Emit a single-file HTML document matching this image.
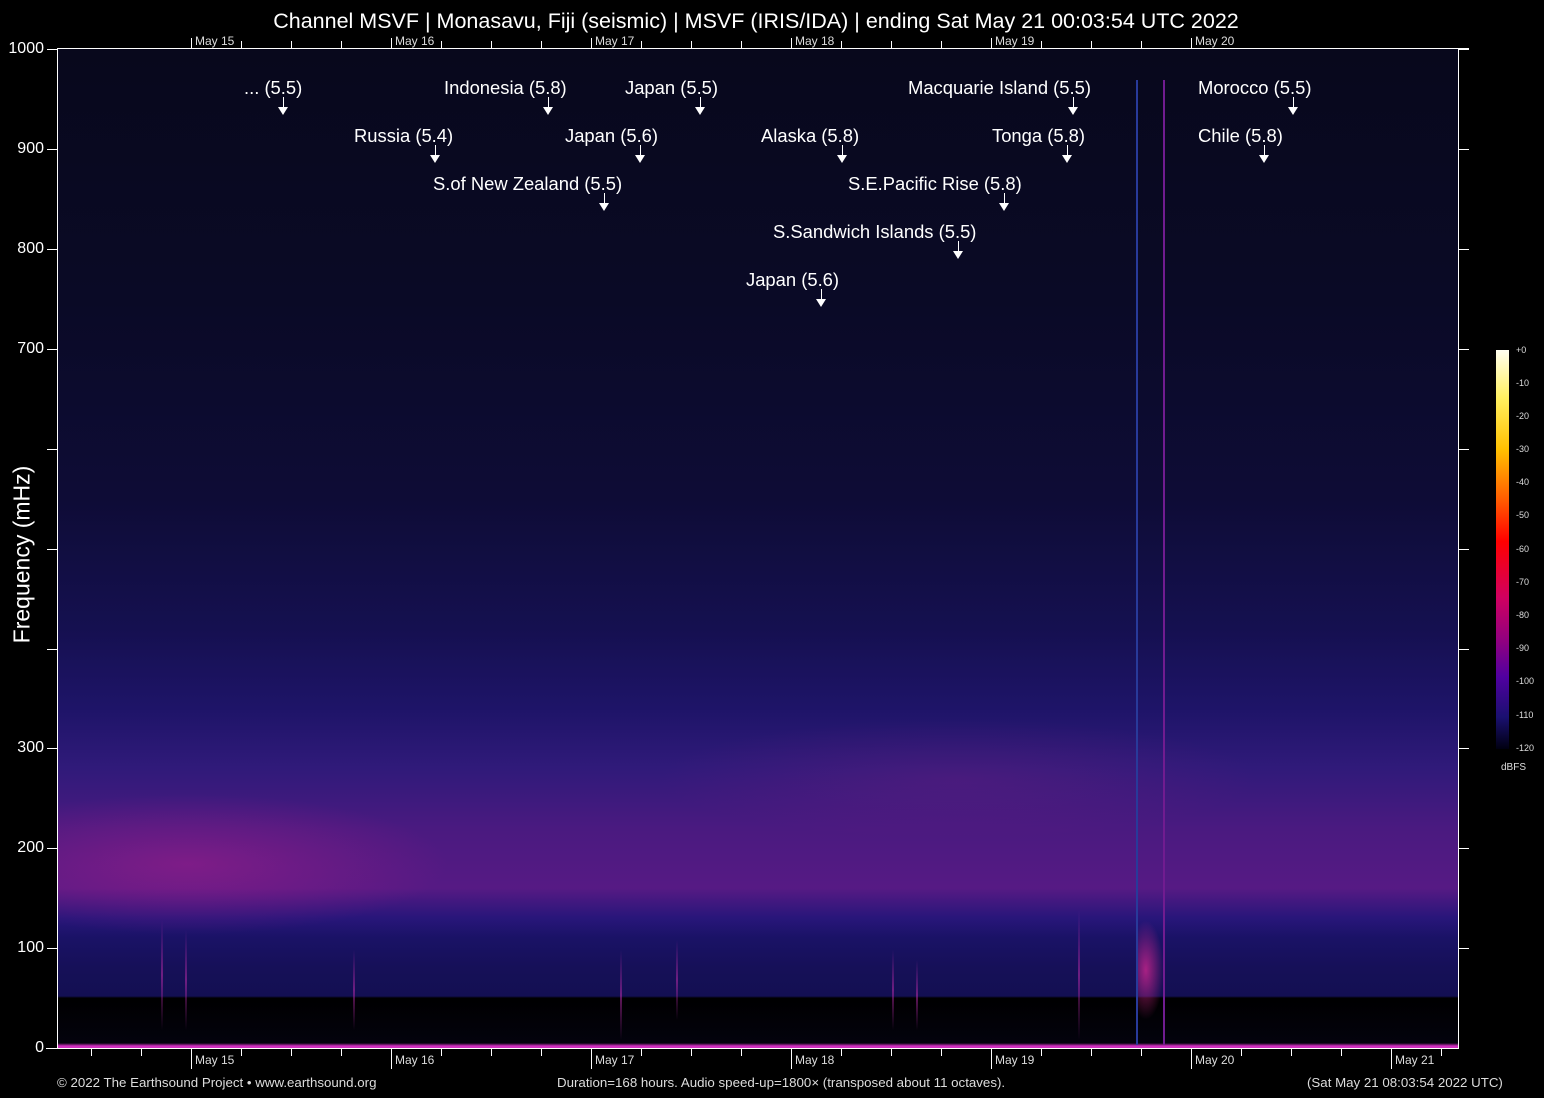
<!DOCTYPE html><html><head><style>
body{margin:0;background:#000;width:1544px;height:1098px;position:relative;overflow:hidden;font-family:"Liberation Sans",sans-serif;color:#fff}
.a{position:absolute;white-space:nowrap}
#plot{position:absolute;left:58px;top:49px;width:1400px;height:999px;
background:
linear-gradient(to bottom,rgba(0,0,0,0) 0,rgba(0,0,0,0) 94.8%,#000 95%,#03020d 99.5%,#d030c0 99.8%),
radial-gradient(ellipse 260px 70px at 130px 815px,rgba(170,30,140,.5),rgba(0,0,0,0)),
radial-gradient(ellipse 300px 60px at 900px 730px,rgba(120,30,130,.3),rgba(0,0,0,0)),
linear-gradient(to bottom,#08081c 0,#0a0a26 25%,#0e0c36 45%,#151050 58%,#1e1468 66%,#301a7a 72%,#4a1a80 78%,#561a84 84%,#28167a 87%,#1a1266 89%,#161058 92%,#130f52 94.8%)}
.t{position:absolute;background:#fff}
.ev{position:absolute;font-size:18.4px}
.ar{position:absolute;width:1px;height:14px;background:#fff}
.ah{position:absolute;width:0;height:0;border-left:5px solid transparent;border-right:5px solid transparent;border-top:8px solid #fff}
.yl{position:absolute;font-size:16px;text-align:right;width:44px;left:0}
.ml{position:absolute;font-size:12px;color:#ddd}
.cb{position:absolute;font-size:9px;color:#ddd;left:1516px}
.sp{position:absolute;width:2px;background:linear-gradient(to bottom,rgba(0,0,0,0),rgba(170,40,160,.6),rgba(0,0,0,0))}
</style></head><body>
<div class="a" style="left:0;width:1512px;text-align:center;top:9px;font-size:21.5px">Channel MSVF | Monasavu, Fiji (seismic) | MSVF (IRIS/IDA) | ending Sat May 21 00:03:54 UTC 2022</div>
<div id="plot"></div>
<div class="sp" style="left:161px;top:920px;height:110px"></div>
<div class="sp" style="left:185px;top:930px;height:100px"></div>
<div class="sp" style="left:353px;top:950px;height:80px"></div>
<div class="sp" style="left:620px;top:950px;height:90px"></div>
<div class="sp" style="left:676px;top:940px;height:80px"></div>
<div class="sp" style="left:892px;top:950px;height:80px"></div>
<div class="sp" style="left:916px;top:960px;height:70px"></div>
<div class="sp" style="left:1078px;top:910px;height:130px"></div>
<div class="a" style="left:1136px;top:80px;width:2px;height:965px;background:#283a9a"></div>
<div class="a" style="left:1163px;top:80px;width:2px;height:965px;background:#701c90"></div>
<div class="a" style="left:1138px;top:920px;width:26px;height:100px;background:radial-gradient(ellipse at 30% 50%,rgba(230,40,150,.7),rgba(0,0,0,0) 70%)"></div>
<div class="t" style="left:57px;top:49px;width:1px;height:1000px"></div>
<div class="t" style="left:1458px;top:49px;width:1px;height:1000px"></div>
<div class="t" style="left:57px;top:48px;width:1412px;height:1px"></div>
<div class="t" style="left:46px;top:1048px;width:1412px;height:1px"></div>
<div id="ticks"></div>
<div class="yl" style="top:40px">1000</div>
<div class="yl" style="top:140px">900</div>
<div class="yl" style="top:240px">800</div>
<div class="yl" style="top:340px">700</div>
<div class="yl" style="top:739px">300</div>
<div class="yl" style="top:839px">200</div>
<div class="yl" style="top:939px">100</div>
<div class="yl" style="top:1039px">0</div>
<div class="a" style="left:-73px;top:541px;font-size:23px;transform:rotate(-90deg);width:190px;text-align:center">Frequency (mHz)</div>
<div class="ev" style="left:244px;top:77px">... (5.5)</div>
<div class="ev" style="left:444px;top:77px">Indonesia (5.8)</div>
<div class="ev" style="left:625px;top:77px">Japan (5.5)</div>
<div class="ev" style="left:908px;top:77px">Macquarie Island (5.5)</div>
<div class="ev" style="left:1198px;top:77px">Morocco (5.5)</div>
<div class="ev" style="left:354px;top:125px">Russia (5.4)</div>
<div class="ev" style="left:565px;top:125px">Japan (5.6)</div>
<div class="ev" style="left:761px;top:125px">Alaska (5.8)</div>
<div class="ev" style="left:992px;top:125px">Tonga (5.8)</div>
<div class="ev" style="left:1198px;top:125px">Chile (5.8)</div>
<div class="ev" style="left:433px;top:173px">S.of New Zealand (5.5)</div>
<div class="ev" style="left:848px;top:173px">S.E.Pacific Rise (5.8)</div>
<div class="ev" style="left:773px;top:221px">S.Sandwich Islands (5.5)</div>
<div class="ev" style="left:746px;top:269px">Japan (5.6)</div>
<div id="arrows"></div>
<div class="a" style="left:1496px;top:350px;width:13px;height:399px;background:linear-gradient(to bottom,#fffff0 0%,#fff060 12%,#ffc000 25%,#ff6000 37%,#ff0000 48%,#d00060 62%,#900080 73%,#5000a0 82%,#1a1070 92%,#000010 100%)"></div>
<div class="cb" style="top:345px">+0</div><div class="cb" style="top:378px">-10</div><div class="cb" style="top:411px">-20</div><div class="cb" style="top:444px">-30</div><div class="cb" style="top:477px">-40</div><div class="cb" style="top:510px">-50</div><div class="cb" style="top:544px">-60</div><div class="cb" style="top:577px">-70</div><div class="cb" style="top:610px">-80</div><div class="cb" style="top:643px">-90</div><div class="cb" style="top:676px">-100</div><div class="cb" style="top:710px">-110</div><div class="cb" style="top:743px">-120</div>
<div class="a" style="left:1501px;top:762px;font-size:10px;color:#ddd">dBFS</div>
<div class="a" style="left:57px;top:1075px;font-size:13.3px;color:#ddd">© 2022 The Earthsound Project • www.earthsound.org</div>
<div class="a" style="left:557px;top:1075px;font-size:13.3px;color:#ddd">Duration=168 hours. Audio speed-up=1800× (transposed about 11 octaves).</div>
<div class="a" style="left:1307px;top:1075px;font-size:13.3px;color:#ddd">(Sat May 21 08:03:54 2022 UTC)</div>
<script>
var h='';
[49,149,249,349,449,549,649,748,848,948].forEach(function(y){h+='<div class="t" style="left:47px;top:'+y+'px;width:10px;height:1px"></div><div class="t" style="left:1459px;top:'+y+'px;width:10px;height:1px"></div>';});
for(var x=91;x<1458;x+=50){var big=((x-191)%200===0);h+='<div class="t" style="left:'+x+'px;top:1048px;width:1px;height:'+(big?21:8)+'px"></div>';if(x>=191&&x<=1191)h+='<div class="t" style="left:'+x+'px;top:'+(big?38:41)+'px;width:1px;height:'+(big?10:7)+'px"></div>';}
var d=['May 15','May 16','May 17','May 18','May 19','May 20','May 21'];
d.forEach(function(s,i){var x=191+200*i;h+='<div class="ml" style="left:'+(x+4)+'px;top:1053px">'+s+'</div>';if(i<6)h+='<div class="ml" style="left:'+(x+4)+'px;top:34px">'+s+'</div>';});
document.getElementById('ticks').innerHTML=h;
var a='';[[283,97],[548,97],[700,97],[1073,97],[1293,97],[435,145],[640,145],[842,145],[1067,145],[1264,145],[604,193],[1004,193],[958,241],[821,289]].forEach(function(p){a+='<div class="ar" style="left:'+p[0]+'px;top:'+p[1]+'px"></div><div class="ah" style="left:'+(p[0]-5)+'px;top:'+(p[1]+10)+'px"></div>';});
document.getElementById('arrows').innerHTML=a;
</script>
</body></html>
